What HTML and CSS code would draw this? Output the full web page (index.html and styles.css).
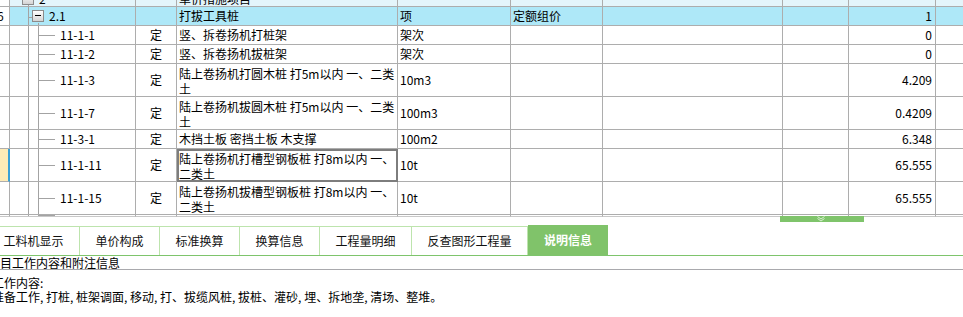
FILE: index.html
```html
<!DOCTYPE html>
<html lang="zh-CN">
<head>
<meta charset="utf-8">
<title>说明信息</title>
<link rel="stylesheet" href="styles.css">
</head>
<body>
<div class="grid">
  <div class="row h7 top">
    <div class="c c0"></div>
    <div class="c c1 bottom"><span class="box"></span><span class="code2">2</span></div>
    <div class="c"></div>
    <div class="c name bottom">单价措施项目</div>
    <div class="c"></div><div class="c"></div><div class="c"></div><div class="c"></div><div class="c"></div><div class="c last"></div>
  </div>
  <div class="row h19 hl">
    <div class="c c0"><span class="num0">6</span></div>
    <div class="c c1 open"><span class="box minus"></span><span class="code21">2.1</span></div>
    <div class="c"></div>
    <div class="c name">打拔工具桩</div>
    <div class="c unit">项</div>
    <div class="c unit">定额组价</div>
    <div class="c"></div><div class="c"></div>
    <div class="c val">1</div>
    <div class="c last"></div>
  </div>
  <div class="row h19">
    <div class="c c0"></div>
    <div class="c c1 leaf"><span class="code">11-1-1</span></div>
    <div class="c mid">定</div>
    <div class="c name">竖、拆卷扬机打桩架</div>
    <div class="c unit">架次</div>
    <div class="c"></div><div class="c"></div><div class="c"></div>
    <div class="c val">0</div>
    <div class="c last"></div>
  </div>
  <div class="row h19">
    <div class="c c0"></div>
    <div class="c c1 leaf"><span class="code">11-1-2</span></div>
    <div class="c mid">定</div>
    <div class="c name">竖、拆卷扬机拔桩架</div>
    <div class="c unit">架次</div>
    <div class="c"></div><div class="c"></div><div class="c"></div>
    <div class="c val">0</div>
    <div class="c last"></div>
  </div>
  <div class="row h33">
    <div class="c c0"></div>
    <div class="c c1 leaf"><span class="code">11-1-3</span></div>
    <div class="c mid">定</div>
    <div class="c name two">陆上卷扬机打圆木桩 打5m以内 一、二类<br>土</div>
    <div class="c unit">10m3</div>
    <div class="c"></div><div class="c"></div><div class="c"></div>
    <div class="c val">4.209</div>
    <div class="c last"></div>
  </div>
  <div class="row h33">
    <div class="c c0"></div>
    <div class="c c1 leaf"><span class="code">11-1-7</span></div>
    <div class="c mid">定</div>
    <div class="c name two">陆上卷扬机拔圆木桩 打5m以内 一、二类<br>土</div>
    <div class="c unit">100m3</div>
    <div class="c"></div><div class="c"></div><div class="c"></div>
    <div class="c val">0.4209</div>
    <div class="c last"></div>
  </div>
  <div class="row h19">
    <div class="c c0"></div>
    <div class="c c1 leaf"><span class="code">11-3-1</span></div>
    <div class="c mid">定</div>
    <div class="c name">木挡土板 密挡土板 木支撑</div>
    <div class="c unit">100m2</div>
    <div class="c"></div><div class="c"></div><div class="c"></div>
    <div class="c val">6.348</div>
    <div class="c last"></div>
  </div>
  <div class="row h33">
    <div class="c c0 cur"></div>
    <div class="c c1 leaf"><span class="code">11-1-11</span></div>
    <div class="c mid">定</div>
    <div class="c name two sel">陆上卷扬机打槽型钢板桩 打8m以内 一、<br>二类土</div>
    <div class="c unit">10t</div>
    <div class="c"></div><div class="c"></div><div class="c"></div>
    <div class="c val">65.555</div>
    <div class="c last"></div>
  </div>
  <div class="row h33">
    <div class="c c0"></div>
    <div class="c c1 leaf"><span class="code">11-1-15</span></div>
    <div class="c mid">定</div>
    <div class="c name two">陆上卷扬机拔槽型钢板桩 打8m以内 一、<br>二类土</div>
    <div class="c unit">10t</div>
    <div class="c"></div><div class="c"></div><div class="c"></div>
    <div class="c val">65.555</div>
    <div class="c last"></div>
  </div>
  <div class="row h2 faint">
    <div class="c c0"></div>
    <div class="c c1 leaf"></div>
    <div class="c"></div><div class="c"></div><div class="c"></div><div class="c"></div><div class="c"></div><div class="c"></div><div class="c"></div><div class="c last"></div>
  </div>
</div>

<div class="splitter"><svg width="12" height="6" viewBox="0 0 12 6"><polyline points="2.5,0.5 6,3 9.5,0.5" fill="none" stroke="#d8efd0" stroke-width="1"/><polyline points="2.5,2.5 6,5 9.5,2.5" fill="none" stroke="#d8efd0" stroke-width="1"/></svg></div>

<div class="tabs">
  <div class="tab">工料机显示</div>
  <div class="tab">单价构成</div>
  <div class="tab">标准换算</div>
  <div class="tab">换算信息</div>
  <div class="tab">工程量明细</div>
  <div class="tab">反查图形工程量</div>
  <div class="tab active">说明信息</div>
</div>

<div class="panel">
  <div class="panel-head">项目工作内容和附注信息</div>
  <div class="panel-body">
    <div class="line">工作内容:</div>
    <div class="line">准备工作, 打桩, 桩架调面, 移动, 打、拔缆风桩, 拔桩、灌砂, 埋、拆地垄, 清场、整堆。</div>
  </div>
</div>
</body>
</html>
```

FILE: styles.css
```css
html, body {
  margin: 0;
  padding: 0;
  background: #ffffff;
}
body {
  width: 963px;
  height: 317px;
  overflow: hidden;
  position: relative;
  font-family: "Noto Sans CJK SC", "Noto Sans", sans-serif;
  font-size: 12px;
  color: #000;
}

.grid {
  display: flex;
  flex-direction: column;
}
.row {
  display: grid;
  grid-template-columns: 10px 126px 41px 221px 113px 92px 180px 66px 87px 1fr;
}
.h7 { height: 7px; }
.h19 { height: 19px; }
.h33 { height: 33px; }
.h2 { height: 2px; }

.c {
  box-sizing: border-box;
  border-right: 1px solid #adadad;
  border-bottom: 1px solid #adadad;
  display: flex;
  align-items: center;
  overflow: hidden;
  white-space: nowrap;
  line-height: 14px;
  min-width: 0;
}
.c.last { border-right: none; }
.faint .c { border-bottom-color: #c8c8c8; }

.top .c { background: #e4f5fb; }
.top .c.c0 { background: #fff; }
.hl .c { background: #aee8f8; }
.hl .c.c0 { background: #fff; }

.c0 { justify-content: flex-start; }
.num0 { margin-left: -3px; }
.c0.cur {
  background: #feebb7;
  border-right: 2px solid #3aa0d6;
}

.bottom { align-items: flex-end; }

.c1 { position: relative; }
.c1.bottom {
  background:
    linear-gradient(#a3a3a3, #a3a3a3) 18px 0 / 1px 100% no-repeat,
    #e4f5fb !important;
}
.c1.open {
  background:
    linear-gradient(#a3a3a3, #a3a3a3) 18px 0 / 1px 100% no-repeat,
    linear-gradient(#a3a3a3, #a3a3a3) 28px 16px / 1px 100% no-repeat,
    linear-gradient(#a3a3a3, #a3a3a3) 18px 10px / 4px 1px no-repeat,
    #aee8f8 !important;
}
.c1.leaf {
  background:
    linear-gradient(#a3a3a3, #a3a3a3) 18px 0 / 1px 100% no-repeat,
    linear-gradient(#a3a3a3, #a3a3a3) 28px 0 / 1px 100% no-repeat,
    linear-gradient(#a3a3a3, #a3a3a3) 28px 50% / 17px 1px no-repeat;
}

.box {
  box-sizing: border-box;
  width: 12px;
  height: 12px;
  flex: none;
  border: 1px solid #8c8c8c;
  background: linear-gradient(#ffffff, #d4d4d4);
  position: relative;
}
.c1.bottom .box { margin: 0 0 1px 12px; }
.c1.open .box { margin: -1px 0 0 22px; }
.box.minus::after {
  content: "";
  position: absolute;
  left: 2px;
  top: 4px;
  width: 6px;
  height: 1px;
  background: #000;
}
.code2 { margin-left: 5px; }
.code21 { margin-left: 5px; }
.code { margin-left: 50px; }

.mid { justify-content: center; }
.name { padding-left: 2px; }
.name.two { line-height: 15px; padding-top: 1px; }
.unit { padding-left: 2px; }
.val { justify-content: flex-end; padding-right: 3px; }

.name.sel {
  outline: 2px solid #7d7d7d;
  outline-offset: -2px;
}

.splitter {
  position: absolute;
  left: 780px;
  top: 216px;
  width: 84px;
  height: 6px;
  background: #7fc46b;
  display: flex;
  justify-content: center;
  align-items: center;
}
.splitter svg { display: block; margin-left: -2px; }

.tabs {
  display: flex;
  align-items: flex-end;
  margin: 8px 0 0 -12px;
  border-bottom: 1px solid #7ec46c;
}
.tab {
  box-sizing: border-box;
  height: 29px;
  padding: 0 15.5px;
  border-top: 1px solid #bde4ad;
  border-right: 1px solid #bde4ad;
  display: flex;
  align-items: center;
  line-height: 14px;
  white-space: nowrap;
  color: #111;
}
.tab.active {
  height: 30px;
  border: none;
  padding: 0 16px;
  background: #80c36a;
  color: #ffffff;
  font-weight: bold;
}

.panel-head {
  height: 13px;
  line-height: 13px;
  border-bottom: 1px solid #a9a9ad;
  text-indent: -12px;
  white-space: nowrap;
  overflow: hidden;
}
.panel-body {
  padding-top: 6px;
  margin-left: -8px;
}
.line {
  line-height: 14px;
  white-space: nowrap;
}
```
